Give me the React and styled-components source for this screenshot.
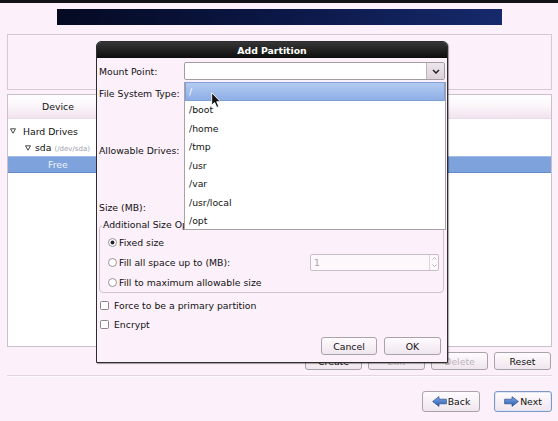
import React from 'react';
import styled, { createGlobalStyle } from 'styled-components';

const GlobalStyle = createGlobalStyle`
  html, body {
    margin: 0;
    padding: 0;
    background: #fcf0fa;
  }
  body {
    font-family: "DejaVu Sans", "Liberation Sans", sans-serif;
    font-size: 9.3px;
    color: #111;
  }
  * { box-sizing: border-box; }
`;

const Page = styled.div`
  position: relative;
  width: 558px;
  height: 421px;
  overflow: hidden;
  display: flex;
  flex-direction: column;
  background: #fcf0fa;
`;

const TopRule = styled.div`
  flex-shrink: 0;
  height: 3px;
  background: #121212;
`;

const Banner = styled.div`
  flex-shrink: 0;
  margin: 6px 0 0 57px;
  width: 445px;
  height: 16px;
  background: linear-gradient(90deg, #050a22 0%, #0b1746 50%, #16296b 100%);
`;

const InfoPanel = styled.div`
  flex-shrink: 0;
  margin: 9px 6px 0 7px;
  height: 56px;
  border: 1px solid #d3cad2;
`;

const TreePanel = styled.div`
  flex-shrink: 0;
  margin: 4px 6px 0 7px;
  height: 253px;
  border: 1px solid #c9c0c8;
  background: #fff;
  display: flex;
  flex-direction: column;
`;

const TreeHeader = styled.div`
  display: flex;
  height: 24px;
  margin-bottom: 4px;
  background: linear-gradient(#ffffff 0%, #fbf5fa 50%, #f2e3ef 100%);
  border-bottom: 1px solid #eadde7;
`;

const HeaderCell = styled.div`
  width: ${(p) => p.$width}px;
  display: flex;
  align-items: center;
  justify-content: center;
  border-right: 1px solid #dccfd9;
`;

const TreeRow = styled.div`
  height: 16.5px;
  display: flex;
  align-items: center;
  padding-left: ${(p) => p.$indent}px;
  gap: ${(p) => p.$gap || 0}px;
  background: ${(p) => (p.$selected ? '#7ea2db' : 'transparent')};
  border-top: 1px solid ${(p) => (p.$selected ? '#a3bde8' : 'transparent')};
  border-bottom: 1px solid ${(p) => (p.$selected ? '#6189cb' : 'transparent')};
  color: ${(p) => (p.$selected ? '#eef2fb' : '#111')};
`;

const DevPath = styled.span`
  font-size: 7px;
  color: #a2a0b0;
  margin-left: 3px;
`;

const ActionBar = styled.div`
  flex-shrink: 0;
  display: flex;
  justify-content: flex-end;
  gap: 6px;
  margin-top: 5px;
  padding-right: 7px;
`;

const Button = styled.button`
  width: ${(p) => p.$width || 57}px;
  height: ${(p) => p.$height || 18}px;
  padding: 0;
  font: inherit;
  color: #111;
  border: 1px solid ${(p) => (p.$focused ? '#7e98c6' : '#aaa2a9')};
  border-radius: 3px;
  background: linear-gradient(#fefbfe, #f0e6ee);
  display: flex;
  align-items: center;
  justify-content: center;
  gap: 1px;
  box-shadow: ${(p) => (p.$focused ? 'inset 0 0 0 1px #dfe7f6' : 'none')};

  &:disabled {
    color: #bdb4bc;
  }
`;

const Separator = styled.div`
  flex-shrink: 0;
  margin: 5px 6px 0 7px;
  border-top: 1px solid #e4d6e1;
  border-bottom: 1px solid #fffafe;
`;

const NavBar = styled.div`
  flex-shrink: 0;
  display: flex;
  justify-content: flex-end;
  gap: 14px;
  margin-top: 14px;
  padding-right: 6px;
`;

/* ---------- dialog ---------- */

const Dialog = styled.div`
  position: absolute;
  left: 96px;
  top: 41px;
  width: 352px;
  height: 322px;
  border: 1px solid #2c2c2c;
  border-radius: 5px 5px 0 0;
  background: #fcf0fa;
  box-shadow: 1px 1px 1px rgba(0, 0, 0, 0.35);
  display: flex;
  flex-direction: column;
`;

const TitleBar = styled.div`
  height: 16px;
  flex-shrink: 0;
  border-radius: 4px 4px 0 0;
  background: linear-gradient(#363636, #0d0d0d);
  color: #fff;
  font-weight: bold;
  display: flex;
  align-items: center;
  justify-content: center;
`;

const DialogBody = styled.div`
  padding: 4px 2px 0 2px;
  display: flex;
  flex-direction: column;
`;

const FormGrid = styled.div`
  display: grid;
  grid-template-columns: 85px 1fr;
  grid-template-rows: 18px 22px 88px 22px;
  row-gap: 2px;
  align-items: center;
`;

const Label = styled.div`
  white-space: nowrap;
`;

const Combo = styled.div`
  height: ${(p) => p.$height || 18}px;
  display: flex;
  border: 1px solid #a49ca3;
  border-radius: 2px;
  background: #fff;
  overflow: hidden;
`;

const ComboText = styled.div`
  flex: 1;
`;

const ComboButton = styled.div`
  width: 18px;
  display: flex;
  align-items: center;
  justify-content: center;
  background: linear-gradient(#ece5ea, #dcd3da);
  border-left: 1px solid #bdb4bb;
`;

const DrivesList = styled.div`
  height: 84px;
  border: 1px solid #a49ca3;
  background: #fff;
`;

const Frame = styled.fieldset`
  margin: 2px 1px 0 0;
  padding: 2px 3px 0 2px;
  border: 1px solid #cfc4cd;
  border-radius: 4px;
  min-width: 0;
`;

/* the open popup hides the tail of the caption, so clip it at the popup edge */
const Legend = styled.legend`
  padding: 0 1px;
  line-height: 10px;
  color: #111;
  max-width: 82px;
  overflow: hidden;
  white-space: nowrap;
`;

const OptionRow = styled.label`
  height: ${(p) => p.$height || 20}px;
  display: flex;
  align-items: center;
  gap: ${(p) => p.$gap || 2}px;
  padding-left: ${(p) => p.$indent || 0}px;
  white-space: nowrap;
`;

const SpinBox = styled.div`
  margin-left: auto;
  margin-right: 1px;
  width: 129px;
  height: 17px;
  display: flex;
  border: 1px solid #c7bec6;
  border-radius: 2px;
  background: #fdf8fc;
  color: #aaa3a9;
`;

const SpinValue = styled.div`
  flex: 1;
  padding-left: 3px;
  display: flex;
  align-items: center;
`;

const SpinArrows = styled.div`
  width: 9px;
  display: flex;
  flex-direction: column;
  border-left: 1px solid #ddd4db;
`;

const SpinArrow = styled.div`
  flex: 1;
  display: flex;
  align-items: center;
  justify-content: center;
`;

const CheckList = styled.div`
  margin-top: 3px;
  display: flex;
  flex-direction: column;
`;

const DialogButtons = styled.div`
  margin-top: 3px;
  display: flex;
  justify-content: flex-end;
  gap: 7px;
  padding-right: 4px;
`;

const Popup = styled.div`
  position: absolute;
  left: 87px;
  top: 40px;
  width: 262px;
  height: 148px;
  background: #fff;
  border: 1px solid #a9a2a8;
  border-top: none;
  display: flex;
  flex-direction: column;
`;

const PopupItem = styled.div`
  height: 18.5px;
  flex-shrink: 0;
  display: flex;
  align-items: center;
  padding-left: 3px;
  color: ${(p) => (p.$active ? '#fff' : '#111')};
  background: ${(p) => (p.$active ? 'linear-gradient(#b4cbf1, #8eaee6)' : 'transparent')};
  border: 1px solid ${(p) => (p.$active ? '#80a0d8' : 'transparent')};
`;

const Cursor = styled.svg`
  position: absolute;
  left: 211px;
  top: 92px;
`;

/* ---------- small drawings ---------- */

const Expander = () => (
  <svg width="6" height="6" viewBox="0 0 6 6">
    <path d="M0.5 0.8 L5.5 0.8 L3 5.2 Z" fill="none" stroke="#333" strokeWidth="0.9" />
  </svg>
);

const Chevron = () => (
  <svg width="8" height="5" viewBox="0 0 8 5">
    <path d="M1 1 L4 4 L7 1" fill="none" stroke="#222" strokeWidth="1.5" />
  </svg>
);

const Radio = ({ checked }) => (
  <svg width="9" height="9" viewBox="0 0 9 9">
    <circle cx="4.5" cy="4.5" r="4" fill="#fff" stroke="#8d878c" strokeWidth="0.9" />
    {checked && <circle cx="4.5" cy="4.5" r="1.9" fill="#222" />}
  </svg>
);

const CheckBox = () => (
  <svg width="9" height="9" viewBox="0 0 9 9">
    <rect x="0.5" y="0.5" width="8" height="8" rx="1" fill="#fff" stroke="#7f797e" strokeWidth="0.9" />
  </svg>
);

const SmallArrow = ({ up }) => (
  <svg width="5" height="3" viewBox="0 0 5 3">
    <path d={up ? 'M0.5 2.5 L2.5 0.5 L4.5 2.5' : 'M0.5 0.5 L2.5 2.5 L4.5 0.5'} fill="none" stroke="#b1a9b0" strokeWidth="0.8" />
  </svg>
);

const BlueArrow = ({ flip }) => (
  <svg width="15" height="11" viewBox="0 0 15 11" style={flip ? { transform: 'scaleX(-1)' } : undefined}>
    <defs>
      <linearGradient id={flip ? 'arrN' : 'arrB'} x1="0" y1="0" x2="0" y2="1">
        <stop offset="0" stopColor="#7eaaea" />
        <stop offset="1" stopColor="#2a5cae" />
      </linearGradient>
    </defs>
    <path
      d="M0.6 5.5 L7 0.6 L7 3.2 L14.4 3.2 L14.4 7.8 L7 7.8 L7 10.4 Z"
      fill={`url(#${flip ? 'arrN' : 'arrB'})`}
      stroke="#2c4f8e"
      strokeWidth="0.7"
      strokeLinejoin="round"
    />
  </svg>
);

const mountPoints = ['/', '/boot', '/home', '/tmp', '/usr', '/var', '/usr/local', '/opt'];

export default function App() {
  return (
    <>
      <GlobalStyle />
      <Page>
        <TopRule />
        <Banner />
        <InfoPanel />
        <TreePanel>
          <TreeHeader>
            <HeaderCell $width={101}>Device</HeaderCell>
          </TreeHeader>
          <TreeRow $indent={2} $gap={7}>
            <Expander />
            Hard Drives
          </TreeRow>
          <TreeRow $indent={17} $gap={4}>
            <Expander />
            <span>
              sda<DevPath>(/dev/sda)</DevPath>
            </span>
          </TreeRow>
          <TreeRow $indent={40} $selected>
            Free
          </TreeRow>
        </TreePanel>
        <ActionBar>
          <Button>Create</Button>
          <Button disabled>Edit</Button>
          <Button disabled>Delete</Button>
          <Button>Reset</Button>
        </ActionBar>
        <Separator />
        <NavBar>
          <Button $width={58} $height={21}>
            <BlueArrow />
            Back
          </Button>
          <Button $width={58} $height={21} $focused>
            <BlueArrow flip />
            Next
          </Button>
        </NavBar>

        <Dialog>
          <TitleBar>Add Partition</TitleBar>
          <DialogBody>
            <FormGrid>
              <Label>Mount Point:</Label>
              <Combo>
                <ComboText />
                <ComboButton>
                  <Chevron />
                </ComboButton>
              </Combo>
              <Label>File System Type:</Label>
              <Combo $height={20}>
                <ComboText />
                <ComboButton>
                  <Chevron />
                </ComboButton>
              </Combo>
              <Label>Allowable Drives:</Label>
              <DrivesList />
              <Label>Size (MB):</Label>
              <Combo $height={19} />
            </FormGrid>

            <Frame>
              <Legend>Additional Size Options</Legend>
              <OptionRow $indent={6}>
                <Radio checked />
                Fixed size
              </OptionRow>
              <OptionRow $indent={6}>
                <Radio />
                Fill all space up to (MB):
                <SpinBox>
                  <SpinValue>1</SpinValue>
                  <SpinArrows>
                    <SpinArrow>
                      <SmallArrow up />
                    </SpinArrow>
                    <SpinArrow>
                      <SmallArrow />
                    </SpinArrow>
                  </SpinArrows>
                </SpinBox>
              </OptionRow>
              <OptionRow $indent={6}>
                <Radio />
                Fill to maximum allowable size
              </OptionRow>
            </Frame>

            <CheckList>
              <OptionRow $height={19} $indent={1} $gap={5}>
                <CheckBox />
                Force to be a primary partition
              </OptionRow>
              <OptionRow $height={19} $indent={1} $gap={5}>
                <CheckBox />
                Encrypt
              </OptionRow>
            </CheckList>

            <DialogButtons>
              <Button $width={56}>Cancel</Button>
              <Button>OK</Button>
            </DialogButtons>
          </DialogBody>

          <Popup>
            {mountPoints.map((m, i) => (
              <PopupItem key={m} $active={i === 0}>
                {m}
              </PopupItem>
            ))}
          </Popup>
        </Dialog>

        <Cursor width="11" height="17" viewBox="0 0 11 17">
          <path
            d="M0.7 0.7 L0.7 13.2 L3.6 10.5 L5.8 15.4 L7.8 14.5 L5.7 9.7 L9.4 9.7 Z"
            fill="#111"
            stroke="#fff"
            strokeWidth="0.9"
            strokeLinejoin="round"
          />
        </Cursor>
      </Page>
    </>
  );
}
